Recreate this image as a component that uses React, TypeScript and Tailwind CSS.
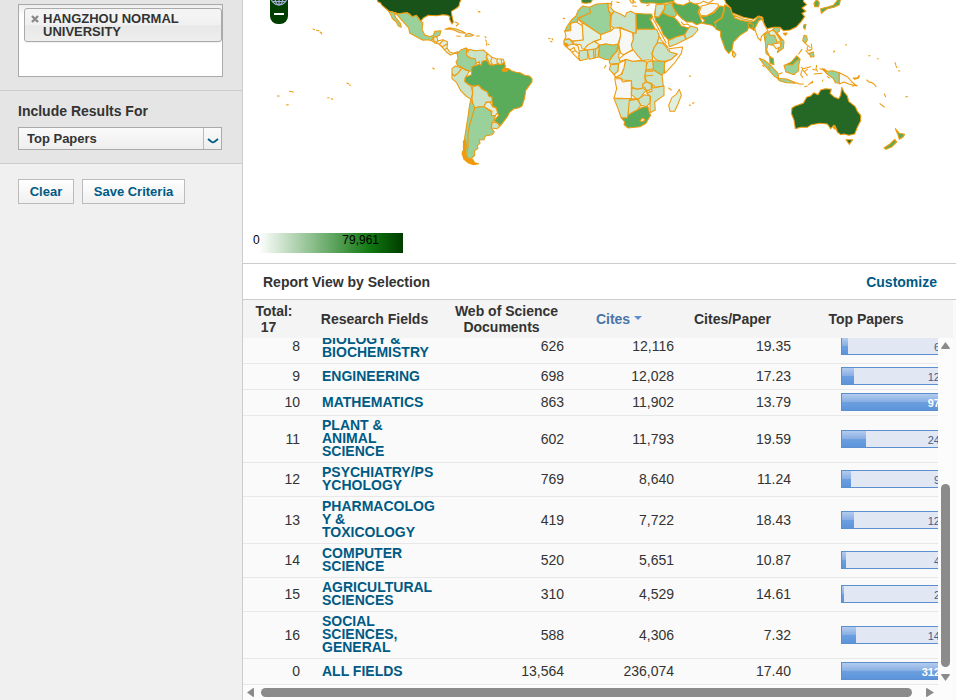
import React from 'react';

type Shape = { d: string; fill: string };

type Row = {
  rank: number;
  field: string;
  docs: string;
  cites: string;
  perPaper: string;
  topPapers: number;
};

const ROWS: Row[] = [
  { rank: 8, field: 'BIOLOGY & BIOCHEMISTRY', docs: '626', cites: '12,116', perPaper: '19.35', topPapers: 6 },
  { rank: 9, field: 'ENGINEERING', docs: '698', cites: '12,028', perPaper: '17.23', topPapers: 12 },
  { rank: 10, field: 'MATHEMATICS', docs: '863', cites: '11,902', perPaper: '13.79', topPapers: 97 },
  { rank: 11, field: 'PLANT & ANIMAL SCIENCE', docs: '602', cites: '11,793', perPaper: '19.59', topPapers: 24 },
  { rank: 12, field: 'PSYCHIATRY/PSYCHOLOGY', docs: '769', cites: '8,640', perPaper: '11.24', topPapers: 9 },
  { rank: 13, field: 'PHARMACOLOGY & TOXICOLOGY', docs: '419', cites: '7,722', perPaper: '18.43', topPapers: 12 },
  { rank: 14, field: 'COMPUTER SCIENCE', docs: '520', cites: '5,651', perPaper: '10.87', topPapers: 4 },
  { rank: 15, field: 'AGRICULTURAL SCIENCES', docs: '310', cites: '4,529', perPaper: '14.61', topPapers: 2 },
  { rank: 16, field: 'SOCIAL SCIENCES, GENERAL', docs: '588', cites: '4,306', perPaper: '7.32', topPapers: 14 },
  { rank: 0, field: 'ALL FIELDS', docs: '13,564', cites: '236,074', perPaper: '17.40', topPapers: 312 },
];

const BAR_MAX = 97;

// choropleth scale, lowest to highest
const C1 = '#f7f7f5';
const C2 = '#e1efdf';
const C3 = '#c9e3c8';
const C4 = '#9ad09a';
const C5 = '#5aac5a';
const C6 = '#256825';
const C7 = '#1a531a';
const LINE = '#ee9b0d';

// Each region is drawn on its own grid, three units to a pixel.
const NORTH_AMERICA: Shape[] = [
  { fill: C7, d: 'M402-5L404 5 412 8 417 16 430 27 437 33 450 36 466 41 492 38 500 42 507 50 514 50 520 46 527 54 533 64 541 54 556 46 580 47 600 44 614 46 621 50 620 58 627 72 631 66 627 48 625 34 640 25 648 18 650 8 656-5Z' },
  { fill: C4, d: 'M437 34L450 37 466 41 492 38 507 50 520 46 533 64 540 68 537 88 545 104 560 110 571 106 575 94 594 92 590 106 580 110 570 112 566 122 555 119 540 121 520 110 500 99 497 84 485 70 472 56 462 44 454 39 458 52 472 70 475 82 466 78 460 66 448 56 443 44Z' },
  { fill: C2, d: 'M566 122L572 112 582 110 584 122 600 119 614 126 612 144 620 156 632 160 643 155 648 162 636 160 622 165 610 156 600 144 588 132 575 129Z' },
  { fill: 'none', d: 'M572 112L572 122 580 126M584 122L580 130M590 132L600 122M598 140L612 132M603 149L612 145M645 155L645 170' },
  { fill: C3, d: 'M606 88L620 83 640 87 656 93 668 100 650 98 638 92 622 87Z' },
  { fill: C3, d: 'M668 104L678 100 692 106 682 109 666 109Z' },
  { fill: 'none', d: 'M641 108L652 109M700 108L709 108M636 66L645 70M640 78L646 72M706 35L710 35M210 87L215 89M220 91L228 92M231 96L236 99 235 102M569 204L574 207M139 274L151 276M103 288L109 288M130 315L136 314M254 293L258 293M265 296L269 298M312 249L317 251M319 255L322 256' },
];

const SOUTH_AMERICA: Shape[] = [
  { fill: C4, d: 'M52 162L62 150 78 144 80 150 80 166 92 174 106 176 110 190 104 198 96 200 96 212 90 214 74 208 66 202 52 196 48 186 54 176Z' },
  { fill: C3, d: 'M78 144L84 148 84 156 88 148 104 152 130 150 142 160 138 172 142 180 134 182 124 196 118 194 118 184 108 190 106 176 92 174 80 166 80 150Z' },
  { fill: C2, d: 'M142 160L156 172 168 176 190 178 194 190 186 194 172 192 158 196 148 190 140 172Z' },
  { fill: 'none', d: 'M156 172L152 184 158 194M172 176L170 184 176 192M184 178L184 192' },
  { fill: C3, d: 'M36 206L46 198 66 204 56 218 44 228 36 222Z' },
  { fill: C3, d: 'M36 222L44 228 56 218 66 204 76 210 88 214 76 234 76 244 84 252 94 260 98 280 93 298 78 288 62 272 50 248 36 236Z' },
  { fill: C5, d: 'M96 200L110 196 118 192 124 197 126 184 136 182 142 182 148 194 158 196 172 192 186 194 192 186 196 198 194 206 206 206 214 212 228 217 240 218 254 226 268 228 276 236 276 246 264 262 257 272 254 294 246 318 238 323 222 326 208 338 202 350 190 366 182 376 162 362 176 346 172 338 168 324 158 318 156 304 146 290 142 276 124 266 116 256 98 258 84 252 74 244 76 232 94 224Z' },
  { fill: C3, d: 'M98 260L116 256 124 266 142 276 146 288 156 292 156 306 138 306 132 320 118 320 104 324 98 310 96 296 98 280Z' },
  { fill: C2, d: 'M132 320L138 308 150 306 158 320 168 324 173 338 166 347 154 346 156 334Z' },
  { fill: C4, d: 'M104 324L118 320 132 320 154 336 154 346 166 348 160 362 154 374 154 384 163 396 156 404 136 408 132 419 118 420 120 430 112 436 114 446 104 452 104 466 94 476 84 474 76 460 82 440 80 400 90 370 96 350Z' },
  { fill: C3, d: 'M157 366L170 368 180 378 172 386 154 384Z' },
  { fill: C4, d: 'M92 298L99 312 104 324 96 350 90 370 84 400 84 440 80 460 82 474 72 470 70 440 76 400 84 350 88 320Z' },
  { fill: LINE, d: 'M70 424L77 420 79 440 75 464 84 476 98 478 104 488 116 491 100 494 86 489 72 478 66 460 72 446Z' },
  { fill: LINE, d: 'M186 210L194 203 206 208 200 214 190 215Z' },
  { fill: 'none', d: 'M116 35L120 35M135 110L138 113M137 120L139 124M140 128L140 136M145 133L147 134M326 115L330 116M336 116L339 120M332 124L336 126M370 55L373 56M493 204L498 196' },
];

const AFRICA: Shape[] = [
  { fill: C4, d: 'M98 18L118 22 122 38 102 47 84 54 82 66 64 68 60 90 44 94 52 78 64 60 78 48 84 32Z' },
  { fill: C4, d: 'M118 22L140 12 174 10 176 32 182 48 180 78 184 92 152 104 84 56 102 47 122 38Z' },
  { fill: C3, d: 'M174 10L186 12 182 22 192 34 184 44 176 32Z' },
  { fill: C3, d: 'M184 46L192 34 212 42 226 50 230 38 242 34 258 42 258 100 248 98 210 82 192 86 182 76Z' },
  { fill: C5, d: 'M258 40L284 42 304 42 308 50 302 60 316 88 260 88Z' },
  { fill: C1, d: 'M44 94L62 92 62 70 80 66 98 78 100 120 68 123 56 116 44 118 48 108Z' },
  { fill: C2, d: 'M82 58L152 104 152 118 132 124 112 136 104 148 96 146 92 134 72 132 68 124 100 120 96 68Z' },
  { fill: C1, d: 'M152 104L184 92 192 84 210 84 212 106 204 132 190 136 166 132 148 136 136 124 152 118Z' },
  { fill: C1, d: 'M210 84L248 98 250 120 244 134 250 148 236 156 222 164 212 160 206 134 212 106Z' },
  { fill: C3, d: 'M258 100L260 88 320 88 328 108 322 128 312 144 306 160 308 180 290 180 276 182 262 166 248 150 244 134 250 118 250 100Z' },
  { fill: C2, d: 'M328 108L334 120 354 142 346 142 338 130 322 128Z' },
  { fill: C3, d: 'M322 128L338 130 350 142 354 152 382 162 364 178 346 184 330 184 316 178 306 162 312 144Z' },
  { fill: C1, d: 'M356 146L374 144 398 141 394 160 376 186 358 206 344 220 342 188 364 178 382 162 360 156Z' },
  { fill: C4, d: 'M308 182L330 184 344 184 342 216 336 226 310 210Z' },
  { fill: C3, d: 'M292 186L308 182 310 206 286 210Z' },
  { fill: C3, d: 'M286 210L310 210 336 226 340 258 316 262 304 250 290 246 284 228Z' },
  { fill: C3, d: 'M228 178L248 184 276 182 290 186 288 208 284 228 286 248 278 254 280 264 262 268 246 262 244 242 218 240 212 234 194 232 216 222 222 200Z' },
  { fill: C1, d: 'M206 178L222 164 236 156 250 150 264 168 276 181 248 184 228 178 212 184Z' },
  { fill: C3, d: 'M180 180L192 162 202 152 206 136 208 152 206 172 212 190 180 192 178 184Z' },
  { fill: C4, d: 'M148 136L168 132 190 136 204 133 200 154 188 166 178 180 164 178 146 170Z' },
  { fill: C3, d: 'M112 150L136 146 148 140 144 172 118 178Z' },
  { fill: C2, d: 'M102 148L112 136 132 124 148 134 140 146 112 150Z' },
  { fill: C3, d: 'M88 152L112 150 114 176 90 182 86 170Z' },
  { fill: C3, d: 'M42 120L58 117 70 130 60 138 42 134Z' },
  { fill: C1, d: 'M46 138L70 132 84 138 88 154 86 170 90 182 74 166 60 150Z' },
  { fill: LINE, d: 'M42 128L52 132 54 139 46 138Z' },
  { fill: 'none', d: 'M60 150L72 142 76 152 66 156M76 152L86 160M130 148L132 174M136 146L136 172M180 202L190 194M178 208L204 206 206 194M190 222L204 216 202 206' },
  { fill: C3, d: 'M182 194L206 192 204 214 192 224 178 208Z' },
  { fill: C1, d: 'M206 190L226 180 222 204 214 222 198 232 192 224 204 214Z' },
  { fill: C1, d: 'M194 236L212 236 218 246 232 244 244 242 244 296 192 294 200 266Z' },
  { fill: C3, d: 'M246 264L262 268 280 264 278 252 290 246 304 252 304 268 284 276 272 292 262 298 244 284Z' },
  { fill: C3, d: 'M304 252L310 264 342 258 342 286 314 306 316 330 300 338 300 308 302 290 290 280 306 274Z' },
  { fill: C3, d: 'M264 298L284 284 300 288 300 308 290 320 272 316Z' },
  { fill: C3, d: 'M236 302L262 298 272 316 262 330 246 338 234 346Z' },
  { fill: C3, d: 'M192 296L244 296 262 296 238 300 234 344 232 354 214 354 204 326Z' },
  { fill: C5, d: 'M214 354L232 354 234 346 246 338 262 330 276 322 294 320 298 338 302 346 288 370 270 380 234 384 222 374 224 366Z' },
  { fill: C1, d: 'M270 362L278 354 286 360 276 365Z' },
  { fill: C2, d: 'M388 268L394 286 384 312 374 334 360 334 356 316 366 292 378 284Z' },
  { fill: '#37833a', d: 'M94-5L96 8 106 10 122 8 130-5Z' },
  { fill: C5, d: 'M266-5L274 8 290 10 306 8 330 11 350 8 372 4 370-5Z' },
  { fill: C3, d: 'M318 14L346 12 342 28 326 52 314 50Z' },
  { fill: C4, d: 'M346 14L364 8 370 22 380 44 374 50 356 48 338 38 344 26Z' },
  { fill: C5, d: 'M314 50L326 52 338 38 356 48 372 52 382 62 394 78 416 84 406 104 380 110 356 120 340 104 330 80 318 64Z' },
  { fill: C5, d: 'M366 4L380 12 400 16 420 6 440 12 450 22 444 36 450 50 456 68 440 74 426 66 410 66 396 56 386 46 370 24Z' },
  { fill: C3, d: 'M354 122L380 110 402 104 408 118 380 132 358 140Z' },
  { fill: C3, d: 'M404 104L416 84 422 78 442 84 444 90 428 108 408 118Z' },
  { fill: 'none', d: 'M238-2L244 8 250 10 248 0 256 8M248 18L260 19M290 17L298 14M316 28L314 44M298 58L306 50 348 128M200 6L208 8M182 12L186 4M356 264L364 270M418 228L422 229M428 310L432 308M418 315L422 316M40 55L44 56M284 262L292 278M282 268L300 274M286 228L308 226M286 214L308 214M394 66L400 74 412 72 418 76' },
];

const SOUTH_ASIA: Shape[] = [
  { fill: C1, d: 'M-6-5L0 6 14 12 30 10 40 4 54 10 78-5Z' },
  { fill: C1, d: 'M28 36L34 18 50 14 62 10 84 12 86 18 70 36 50 48 32 46Z' },
  { fill: C5, d: 'M36 70L44 62 32 50 50 48 72 38 90 18 102 20 100 36 94 54 74 66 80 86 66 76Z' },
  { fill: C5, d: 'M104 14L122 24 126 40 136 52 168 64 192 64 206 50 218 56 204 72 192 92 178 76 172 92 150 106 130 126 126 150 116 160 106 148 92 110 92 94 78 88 76 68 96 54 102 36Z' },
  { fill: C3, d: 'M132 46L160 57 186 62 184 67 152 61 134 54Z' },
  { fill: C5, d: 'M174 70L190 73 188 88 176 82Z' },
  { fill: C7, d: 'M102-5L108 10 122 24 126 38 160 52 190 58 206 48 218 52 222 72 230 86 252 82 270 82 280 92 300 90 320 80 334 64 344 50 336 40 348 34 336 24 350 14 340 4 342-5Z' },
  { fill: C1, d: 'M206 62L216 58 224 76 234 92 222 102 214 110 212 122 204 114 198 98 194 86Z' },
  { fill: C4, d: 'M222 104L236 96 240 106 254 106 262 118 262 128 246 136 234 132 230 150 238 168 228 160 226 128Z' },
  { fill: C2, d: 'M236 96L248 90 256 96 266 112 272 122 262 128 254 106 240 106Z' },
  { fill: C4, d: 'M248 88L256 82 270 84 268 94 260 98 282 124 280 144 262 158 266 144 274 134 272 118 256 96Z' },
  { fill: C1, d: 'M248 132L272 128 272 140 258 146Z' },
  { fill: C5, d: 'M238 168L250 176 252 194 240 190Z' },
  { fill: C4, d: 'M208 175L222 180 244 198 264 220 266 236 252 228 236 210 222 194Z' },
  { fill: C4, d: 'M262 235L290 237 312 246 318 250 290 248 268 242Z' },
  { fill: C4, d: 'M282 196L302 190 320 168 330 178 326 196 326 212 312 224 288 216Z' },
  { fill: C5, d: 'M288 194L304 186 320 168 330 178 320 182 308 194Z' },
  { fill: C4, d: 'M342 106L350 108 352 120 346 130 338 122Z' },
  { fill: C4, d: 'M358 160L370 156 372 170 362 171Z' },
  { fill: C3, d: 'M128 152L138 164 133 172 127 166Z' },
  { fill: C5, d: 'M342 74L348 73 345 88 340 82Z' },
  { fill: LINE, d: 'M280 100L292 99 286 106Z' },
  { fill: 'none', d: 'M228 108L226 122M346 130L360 142M352 140L352 150 362 150M364 132L366 148 358 152M348 152L358 164M326 162L336 148M334 202L340 206 362 200M338 206L332 224 338 232M340 212L352 226M344 214L352 208M240 206L236 200M218 196L222 200M268 222L276 218' },
];

const OCEANIA: Shape[] = [
  { fill: C6, d: 'M66 324L76 318 100 310 110 292 122 288 132 278 144 284 152 270 166 266 184 268 180 280 194 292 206 296 212 286 215 262 222 276 232 288 236 304 256 320 262 334 272 346 272 362 262 382 254 402 236 406 222 402 212 404 202 396 198 384 192 376 182 386 172 372 150 370 124 374 112 382 92 382 76 386 72 360 64 340Z' },
  { fill: LINE, d: 'M190 376L196 378 198 388 192 386Z' },
  { fill: C6, d: 'M228 419L248 419 238 433Z' },
  { fill: C5, d: 'M376 386L388 400 404 403 398 412 388 418 384 404Z' },
  { fill: C5, d: 'M374 418L380 426 366 440 348 448 342 444 360 432Z' },
  { fill: C4, d: 'M160 210L172 214 188 212 208 218 208 250 196 248 190 236 172 222Z' },
  { fill: C1, d: 'M208 218L232 230 246 246 260 258 236 252 222 246 208 252Z' },
  { fill: C5, d: 'M152 26L176 20 190 16 206-4 212-4 208 14 192 22 172 26 154 40Z' },
  { fill: C5, d: 'M132 10L140-2 148 8 146 20 134 20Z' },
  { fill: LINE, d: 'M250 234L262 233 268 226 266 234 254 238Z' },
  { fill: 'none', d: 'M80 248L88 252 100 252M104 260L112 258M116 254L128 244M128 248L120 250M140 196L138 206 142 214M128 208L136 210M132 222L156 220M150 206L170 212M158 206L166 208M158 240L158 244M172 230L178 234M290 240L300 248M302 246L312 252 318 260M330 311L343 321M343 282L347 290M407 290L413 290M227 134L230 135M191 156L194 153M296 167L300 167M322 176L325 176M375 188L377 194M378 198L381 203M386 212L389 213M246 258L262 256' },
];

const REGIONS = [
  { name: 'north-america', at: 'translate(0 0) scale(0.33333)', shapes: NORTH_AMERICA },
  { name: 'south-america', at: 'translate(197 0) scale(0.33333)', shapes: SOUTH_AMERICA },
  { name: 'africa', at: 'translate(307 0) scale(0.33333)', shapes: AFRICA },
  { name: 'south-asia', at: 'translate(447 0) scale(0.33333)', shapes: SOUTH_ASIA },
  { name: 'oceania', at: 'translate(527 0) scale(0.33333)', shapes: OCEANIA },
];

function WorldMap() {
  return (
    <svg viewBox="0 0 713 263" preserveAspectRatio="xMidYMin meet" className="h-full w-full" role="img" aria-label="World map of citations">
      {REGIONS.map((region) => (
        <g key={region.name} transform={region.at} stroke={LINE} strokeWidth={3.2} strokeLinejoin="round" strokeLinecap="round">
          {region.shapes.map((shape, i) => (
            <path key={i} d={shape.d} fill={shape.fill} />
          ))}
        </g>
      ))}
    </svg>
  );
}

function MapPanel() {
  return (
    <section className="relative h-[263px] shrink-0 overflow-hidden bg-white">
      <WorldMap />
      <button type="button" aria-label="Zoom out" className="absolute left-[27px] top-0 flex h-6 w-[18px] flex-col items-center rounded-b-lg bg-[#003f00]">
        <svg width="18" height="13" viewBox="0 0 18 13" fill="none" stroke="#a9b0dc" strokeWidth="1.2">
          <circle cx="9" cy="-3" r="8" />
          <ellipse cx="9" cy="-3" rx="4" ry="8" />
          <path d="M9-10V5M1-3H17M3 1.5H15" />
        </svg>
        <span className="h-0.5 w-2.5 bg-white" />
      </button>
      <div className="absolute bottom-2.5 left-2.5 flex h-5 w-[150px] justify-between bg-[linear-gradient(90deg,#ffffff_0%,#ffffff_4%,#107810_78%,#003c00_100%)] pr-6 text-xs leading-[15px] text-black">
        <span>0</span>
        <span>79,961</span>
      </div>
    </section>
  );
}

function Sidebar() {
  return (
    <aside className="w-[243px] shrink-0 border-r border-[#cccccc] bg-[#f0f0f0] text-[13px] font-bold">
      <div className="border-b border-[#cccccc] bg-[#e5e5e5] px-[18px] pb-[13px]">
        <div className="flex h-1 flex-col justify-end overflow-hidden">
          <a href="#filter" className="leading-[17px] text-[#005a84]">Add Filter »</a>
        </div>
        <div className="h-[73px] w-[205px] border border-[#aaaaaa] bg-[linear-gradient(#eeeeee_1%,#ffffff_15%)] pl-[5px] pt-[3px]">
          <div className="flex items-start gap-1 rounded-[3px] border border-[#aaaaaa] bg-[linear-gradient(#f4f4f4_20%,#f0f0f0_50%,#e8e8e8_52%,#eeeeee_100%)] py-[3px] pl-1.5 leading-[13px] text-[#333333] shadow-[0_1px_0_rgba(0,0,0,0.05)]">
            <button type="button" aria-label="Remove filter" className="mt-[3px] shrink-0">
              <svg width="8" height="8" viewBox="0 0 8 8" stroke="#8a8a8a" strokeWidth="2.4">
                <path d="M1 1L7 7M7 1L1 7" />
              </svg>
            </button>
            <span>HANGZHOU NORMAL UNIVERSITY</span>
          </div>
        </div>
      </div>

      <div className="border-b border-[#cccccc] bg-[#e5e5e5] px-[18px] pb-[13px] pt-3">
        <label htmlFor="results-for" className="block text-sm leading-4 text-[#333333]">Include Results For</label>
        <div className="relative mt-2 w-[204px]">
          <select
            id="results-for"
            className="block h-[23px] w-full appearance-none border border-[#aaaaaa] bg-[linear-gradient(#fafafa,#eeeeee)] pl-2 pt-px text-[13px] font-bold text-[#333333]"
          >
            <option>Top Papers</option>
          </select>
          <span className="pointer-events-none absolute inset-y-px right-px flex w-[18px] items-center justify-center border-l border-[#bbbbbb]">
            <svg width="12" height="6" viewBox="0 0 12 6" fill="none" stroke="#005a84" strokeWidth="1.8" className="mt-1">
              <path d="M1 1L4.5 3.8Q6 4.8 7.5 3.8L11 1" />
            </svg>
          </span>
        </div>
      </div>

      <div className="flex gap-2 px-[18px] pt-[15px] text-[#005a84]">
        <button type="button" className="h-[25px] w-14 border border-[#bbbbbb] bg-[linear-gradient(#ffffff,#f0f0f0)]">Clear</button>
        <button type="button" className="h-[25px] w-[103px] border border-[#bbbbbb] bg-[linear-gradient(#ffffff,#f0f0f0)]">Save Criteria</button>
      </div>
    </aside>
  );
}

function Columns() {
  return (
    <colgroup>
      <col className="w-[62px]" />
      <col className="w-[139px]" />
      <col className="w-[125px]" />
      <col className="w-[110px]" />
      <col className="w-[117px]" />
      <col className="w-[150px]" />
    </colgroup>
  );
}

function PapersBar({ value }: { value: number }) {
  const full = value >= BAR_MAX;
  return (
    <div className="relative ml-auto h-[18px] w-[102px] border border-[#5b8fd0] bg-[#e1e7f3] text-[11px] leading-[18px]">
      <div
        className="h-full bg-[linear-gradient(#b3ccee_0%,#86ade3_50%,#6c9fdf_50%,#5c94db_100%)]"
        style={{ width: full ? '100%' : `${value}%` }}
      />
      <span className={`absolute right-0.5 top-0 ${full ? 'font-bold text-white' : 'text-[#3f5f8f]'}`}>{value}</span>
    </div>
  );
}

function ReportTable() {
  return (
    <div className="flex min-h-0 flex-1 flex-col bg-[#fafafa] pr-[3px] text-sm text-[#333333]">
      <div className="shrink-0 overflow-hidden bg-[#f4f4f4]">
        <table className="w-[703px] table-fixed">
          <Columns />
          <thead>
            <tr className="h-[38px] leading-4">
              <th>Total:<br /><span className="pr-[11px]">17</span></th>
              <th>Research Fields</th>
              <th>Web of Science<br /><span className="pr-2.5">Documents</span></th>
              <th className="pr-2.5 text-[#4a75a8]">
                <button type="button" className="inline-flex items-center gap-1 font-bold">
                  Cites
                  <svg width="8" height="4" viewBox="0 0 8 4" fill="#5b8fd0" className="mb-0.5"><path d="M0 0H8L4 4Z" /></svg>
                </button>
              </th>
              <th className="pr-2.5">Cites/Paper</th>
              <th className="pr-2.5">Top Papers</th>
            </tr>
          </thead>
        </table>
      </div>

      <div className="flex min-h-0 flex-1">
        <div className="flex min-w-0 flex-1 flex-col justify-end overflow-hidden">
          <table className="w-[703px] table-fixed leading-[13px]">
            <Columns />
            <tbody>
              {ROWS.map((row) => (
                <tr key={row.rank} className="border-b border-[#e8e8e8] text-right">
                  <td className="pr-[5px]">{row.rank}</td>
                  <td className="break-words pb-1 pl-[17px] pr-[7px] pt-[3px] text-left font-bold">
                    <a href="#field" className="text-[#005a84]">{row.field}</a>
                  </td>
                  <td className="pr-[5px]">{row.docs}</td>
                  <td className="pr-[5px]">{row.cites}</td>
                  <td className="pr-[5px]">{row.perPaper}</td>
                  <td className="pb-1 pr-[3px] pt-[3px]"><PapersBar value={row.topPapers} /></td>
                </tr>
              ))}
            </tbody>
          </table>
        </div>

        <div className="flex w-[15px] shrink-0 flex-col items-center justify-between bg-[#fcfcfc] pb-1 pt-1">
          <svg width="9" height="7" viewBox="0 0 9 7" fill="#8b8b8b"><path d="M4.5 0L9 6.2Q9 7 8 7H1Q0 7 0 6.2Z" /></svg>
          <div className="flex w-full flex-1 flex-col items-center justify-end py-[7px]">
            <div className="h-[59%] w-[9px] rounded-full bg-[#8b8b8b]" />
          </div>
          <svg width="9" height="7" viewBox="0 0 9 7" fill="#8b8b8b"><path d="M4.5 7L9 .8Q9 0 8 0H1Q0 0 0 .8Z" /></svg>
        </div>
      </div>

      <div className="flex h-[15px] shrink-0 items-center bg-[#fcfcfc] pl-1 pr-[19px]">
        <svg width="7" height="9" viewBox="0 0 7 9" fill="#8b8b8b"><path d="M0 4.5L6.2 0Q7 0 7 1V8Q7 9 6.2 9Z" /></svg>
        <div className="ml-[7px] mr-3.5 h-[9px] flex-1 rounded-full bg-[#8b8b8b]" />
        <svg width="8" height="9" viewBox="0 0 8 9" fill="#8b8b8b"><path d="M8 4.5L.8 0Q0 0 0 1V8Q0 9 .8 9Z" /></svg>
      </div>
    </div>
  );
}

export default function App() {
  return (
    <div className="flex h-screen overflow-hidden bg-white font-['Liberation_Sans',Arial,sans-serif]">
      <Sidebar />
      <main className="flex min-w-0 flex-1 flex-col">
        <MapPanel />
        <div className="flex h-[37px] shrink-0 items-center justify-between border-y border-[#cccccc] pl-5 pr-[19px] text-sm font-bold">
          <h2 className="text-[#333333]">Report View by Selection</h2>
          <a href="#customize" className="text-[#005a84]">Customize</a>
        </div>
        <ReportTable />
      </main>
    </div>
  );
}
